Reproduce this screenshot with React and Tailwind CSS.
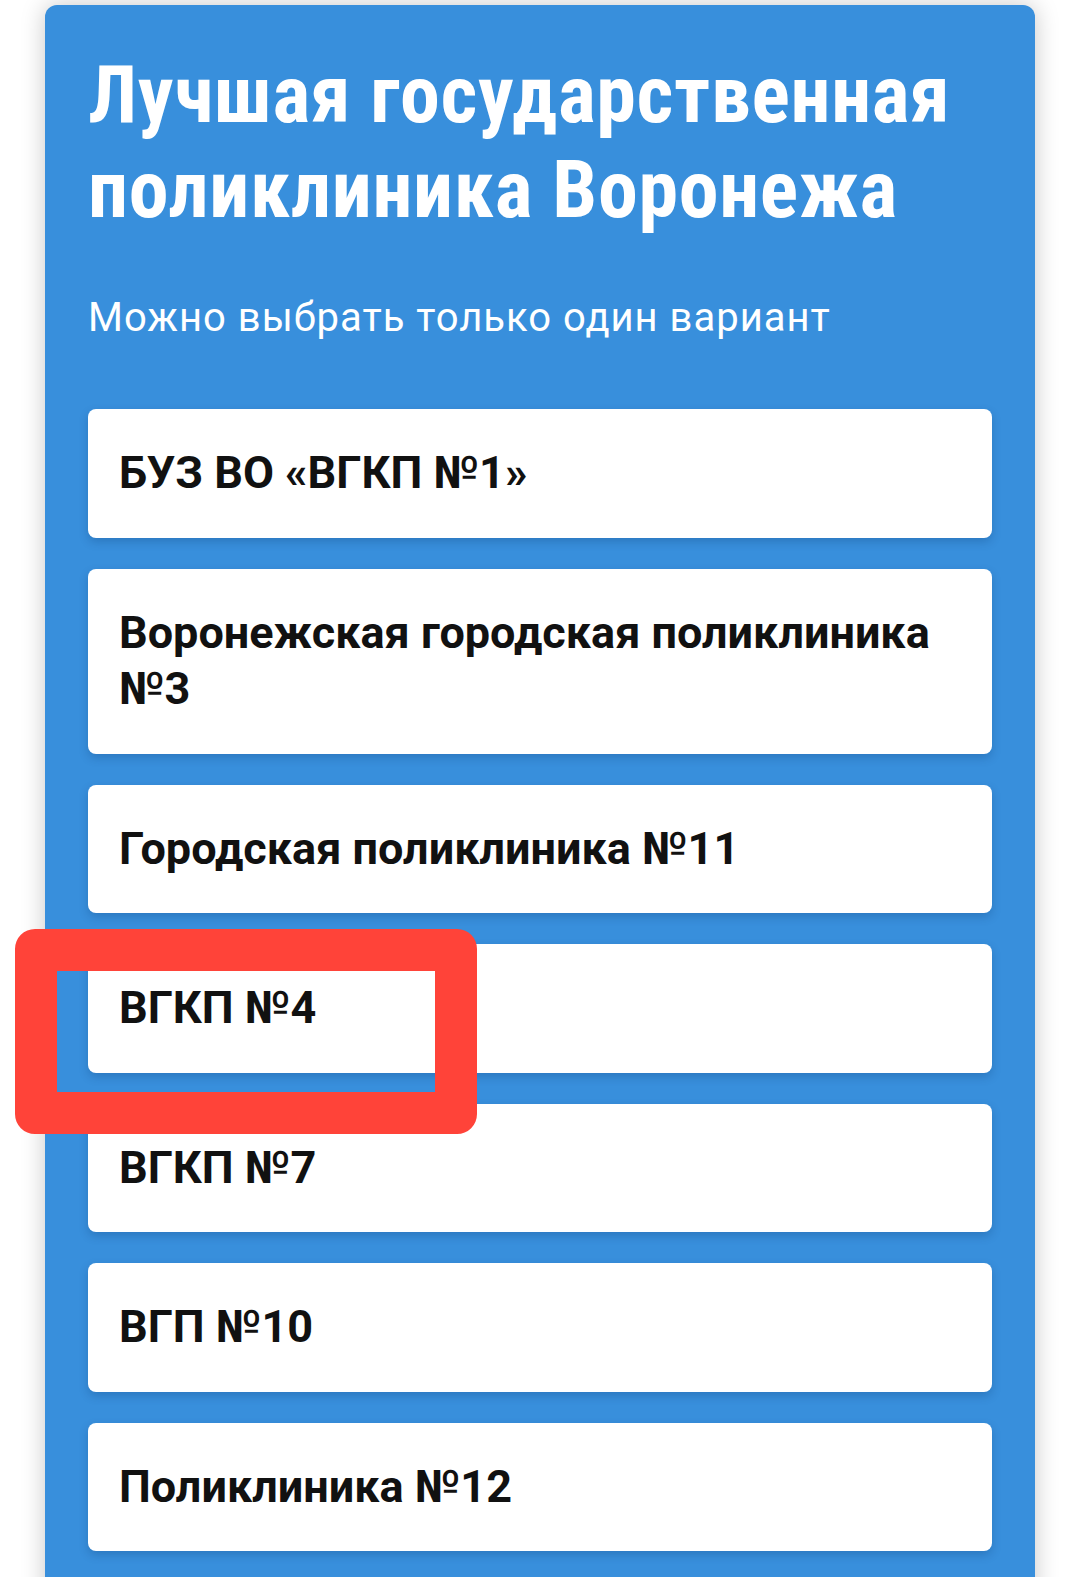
import React from 'react';

const options = [
  'БУЗ ВО «ВГКП №1»',
  'Воронежская городская поликлиника №3',
  'Городская поликлиника №11',
  'ВГКП №4',
  'ВГКП №7',
  'ВГП №10',
  'Поликлиника №12',
];

const OptionCard = ({ label }) => (
  <div className="bg-white rounded-[8px] px-[31px] py-[36px] shadow-[0_4px_10px_rgba(0,40,90,0.22)]">
    <p className="text-[45px] leading-[56.5px] font-bold text-[#111]">{label}</p>
  </div>
);

export default function App() {
  return (
    <div
      className="relative w-[1080px] h-[1577px] overflow-hidden bg-white"
      style={{ fontFamily: 'Roboto, "Noto Sans", sans-serif' }}
    >
      <div className="ml-[45px] mt-[5px] w-[990px] bg-[#388fdc] rounded-[12px] px-[43px] pt-[43px] pb-[60px] shadow-[0_0_24px_rgba(0,0,0,0.22)]">
        <h1
          className="text-white font-bold text-[80px] leading-[95px] tracking-[0.7px] font-stretch-condensed"
          style={{ fontFamily: '"Roboto Condensed", Roboto, "Liberation Sans Narrow", sans-serif' }}
        >
          Лучшая государственная поликлиника Воронежа
        </h1>
        <p className="mt-[57px] text-white text-[40px] leading-[46px] tracking-[1px]">
          Можно выбрать только один вариант
        </p>
        <div className="mt-[68px] flex flex-col gap-[31px]">
          {options.map((o) => (
            <OptionCard key={o} label={o} />
          ))}
        </div>
      </div>

      {/* annotation frame */}
      <div className="absolute left-[15px] top-[929px] w-[462px] h-[205px] border-[42px] border-[#ff4339] rounded-[20px]" />
    </div>
  );
}
